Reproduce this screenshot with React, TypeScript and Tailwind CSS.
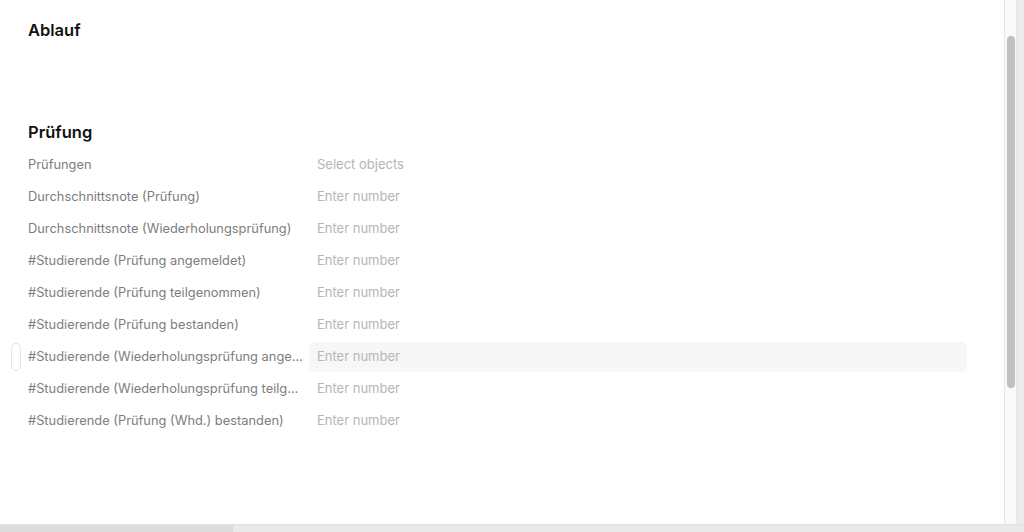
import React from "react";

const rows: { label: string; value: string }[] = [
  { label: "Prüfungen", value: "Select objects" },
  { label: "Durchschnittsnote (Prüfung)", value: "Enter number" },
  { label: "Durchschnittsnote (Wiederholungsprüfung)", value: "Enter number" },
  { label: "#Studierende (Prüfung angemeldet)", value: "Enter number" },
  { label: "#Studierende (Prüfung teilgenommen)", value: "Enter number" },
  { label: "#Studierende (Prüfung bestanden)", value: "Enter number" },
  { label: "#Studierende (Wiederholungsprüfung angemeldet)", value: "Enter number" },
  { label: "#Studierende (Wiederholungsprüfung teilgenommen)", value: "Enter number" },
  { label: "#Studierende (Prüfung (Whd.) bestanden)", value: "Enter number" },
];

export default function App() {
  return (
    <div
      className="w-[1024px] h-[532px] flex flex-col bg-[#ececec] overflow-hidden"
      style={{ fontFamily: "Inter, 'Noto Sans', sans-serif" }}
    >
      <div className="flex flex-1 min-h-0">
        <div className="w-[1005px] bg-white border-r border-[#e6e6e6] pt-[19px]">
          <h2 className="pl-[28px] text-[16.5px] leading-[22px] font-semibold text-[#111]">Ablauf</h2>
          <h2 className="pl-[28px] mt-[80px] text-[16.5px] leading-[22px] font-semibold text-[#111]">Prüfung</h2>
          <div className="mt-[6px]">
            {rows.map((r, i) => (
              <div key={i} className="relative flex items-center h-8">
                {i === 6 && (
                  <div className="absolute left-[11px] top-[2px] w-[10px] h-[28px] rounded-[5px] border border-[#e4e4e4] bg-white" />
                )}
                <div className="w-[309px] shrink-0 pl-[28px] pr-[4px] text-[12.85px] text-[#7d7d7d] truncate">{r.label}</div>
                <div
                  className={`w-[658px] shrink-0 h-[30px] flex items-center px-2 rounded-md text-[13px] text-[#b5b5b5] ${
                    i === 6 ? "bg-[#f7f7f7]" : ""
                  }`}
                >
                  {r.value}
                </div>
              </div>
            ))}
          </div>
        </div>
        <div className="w-[12px] bg-[#f9f9f9] border-r border-[#e8e8e8] pt-[36px] flex justify-center">
          <div className="w-[8px] h-[352px] rounded-full bg-[#c1c1c1]" />
        </div>
        <div className="flex-1 bg-[#ececec]" />
      </div>
      <div className="h-[8px] flex border-t border-[#e2e2e2]">
        <div className="w-[233px] bg-[#dcdcdc]" />
        <div className="flex-1 bg-[#e9e9e9]" />
      </div>
    </div>
  );
}
